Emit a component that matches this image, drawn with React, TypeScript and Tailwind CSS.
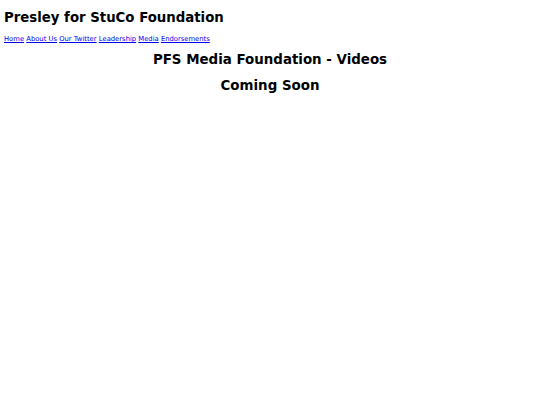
export default function App() {
  const links = ["Home", "About Us", "Our Twitter", "Leadership", "Media", "Endorsements"];
  return (
    <div className="min-h-[405px] bg-white text-black font-['DejaVu_Sans',sans-serif] px-[4px] pt-[10px]">
      <h1 className="text-[13.3px] font-bold leading-[16px]">Presley for StuCo Foundation</h1>
      <nav className="mt-[8px] text-[6.8px] leading-[10px]">
        {links.map((l, i) => (
          <span key={l}>
            <a href="#" className="text-[#0000ee] underline">
              {l}
            </a>
            {i < links.length - 1 ? " " : ""}
          </span>
        ))}
      </nav>
      <h2 className="mt-[7px] text-center text-[13.4px] font-bold leading-[18px]">PFS Media Foundation - Videos</h2>
      <h2 className="mt-[8px] text-center text-[13.4px] font-bold leading-[18px]">Coming Soon</h2>
    </div>
  );
}
